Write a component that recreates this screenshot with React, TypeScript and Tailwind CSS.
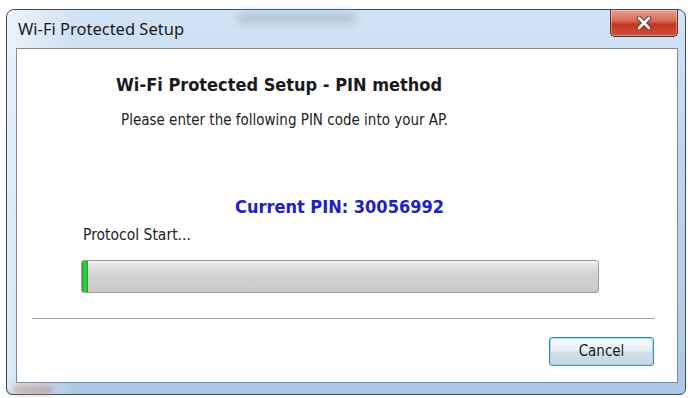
import React from "react";

const tahoma = "font-['DejaVu_Sans_Condensed','DejaVu_Sans',sans-serif]";

const CloseButton = () => (
  <div className="flex h-[27px] w-[68px] items-center justify-center rounded-b-[5px] border border-t-0 border-[#6b2a22] bg-[linear-gradient(180deg,#e6a393_0%,#d66a55_42%,#c0361f_55%,#cf5038_100%)] shadow-[inset_0_0_0_1px_rgba(255,255,255,0.35)]">
    <svg width="16" height="14" viewBox="0 0 16 14">
      <path
        d="M3 2 L13 12 M13 2 L3 12"
        stroke="#5a3a36"
        strokeWidth="4.5"
        strokeLinecap="round"
      />
      <path
        d="M3 2 L13 12 M13 2 L3 12"
        stroke="#ffffff"
        strokeWidth="2.6"
        strokeLinecap="round"
      />
    </svg>
  </div>
);

export default function App() {
  return (
    <div className="h-[398px] w-[693px] overflow-hidden bg-white pl-[6px] pt-[9px]">
      {/* Aero window frame */}
      <div className="relative flex h-[386px] w-[680px] flex-col rounded-b-[6px] rounded-t-[8px] border border-[#3e4b58] bg-[linear-gradient(180deg,#d2e4f4_0%,#bed7ef_35%,#b6d0ea_70%,#adc8e4_100%)]">
        {/* blurred glass smudges */}
        <div className="absolute left-[230px] top-[3px] h-[10px] w-[120px] rounded-full bg-[#8a96a4]/45 blur-[4px]" />
        <div className="absolute left-0 top-0 h-full w-[70px] rounded-l-[8px] bg-[linear-gradient(90deg,rgba(255,255,255,0.6),rgba(255,255,255,0))]" />
        <div className="absolute bottom-0 left-[6px] h-[8px] w-[40px] rounded-full bg-[#b08a7a]/60 blur-[3px]" />

        {/* Title bar */}
        <div className="relative flex h-[38px] shrink-0 items-start justify-between pl-[11px] pr-[7px]">
          <span className="pt-[8px] font-['Noto_Sans',sans-serif] text-[16.5px] leading-[22px] text-[#1b1b1b]">
            Wi-Fi Protected Setup
          </span>
          <CloseButton />
        </div>

        {/* Client area */}
        <div className={`relative ml-[9px] flex h-[335px] w-[662px] flex-col border border-[#7d8c9b] bg-white ${tahoma}`}>
          <h1 className="ml-[99px] mt-[27px] text-[18px] font-bold leading-none text-[#1a1a1a]">
            Wi-Fi Protected Setup - PIN method
          </h1>
          <p className="ml-[104px] mt-[19px] text-[15px] leading-none text-[#222]">
            Please enter the following PIN code into your AP.
          </p>
          <p className="ml-[218px] mt-[70px] text-[18px] font-bold leading-none text-[#2020c8]">
            Current PIN: 30056992
          </p>
          <p className="ml-[66px] mt-[12px] text-[15.5px] leading-none text-[#222]">
            Protocol Start...
          </p>

          {/* Progress bar */}
          <div className="ml-[64px] mt-[16px] flex h-[33px] w-[518px] overflow-hidden rounded-[3px] border border-[#9a9a9a] bg-[linear-gradient(180deg,#f2f2f2_0%,#dedede_20%,#cfcfcf_55%,#c9c9c9_100%)]">
            <div className="h-full w-[6px] bg-[linear-gradient(90deg,#1aa51a,#3fd24a,#1aa51a)]" />
          </div>

          {/* Separator */}
          <div className="ml-[15px] mt-[25px] h-[2px] w-[622px] border-t border-[#a0a0a0] bg-white" />

          {/* Button row */}
          <div className="ml-[532px] mt-[17px]">
            <button className="flex h-[29px] w-[105px] items-center justify-center rounded-[3px] border border-[#3c8fc0] bg-[linear-gradient(180deg,#f4f9fc_0%,#e6eef4_48%,#d4e0e8_52%,#c9d6df_100%)] text-[15px] text-[#1a1a1a] shadow-[inset_0_0_0_1px_#9fd6f0]">
              Cancel
            </button>
          </div>
        </div>
      </div>
    </div>
  );
}
